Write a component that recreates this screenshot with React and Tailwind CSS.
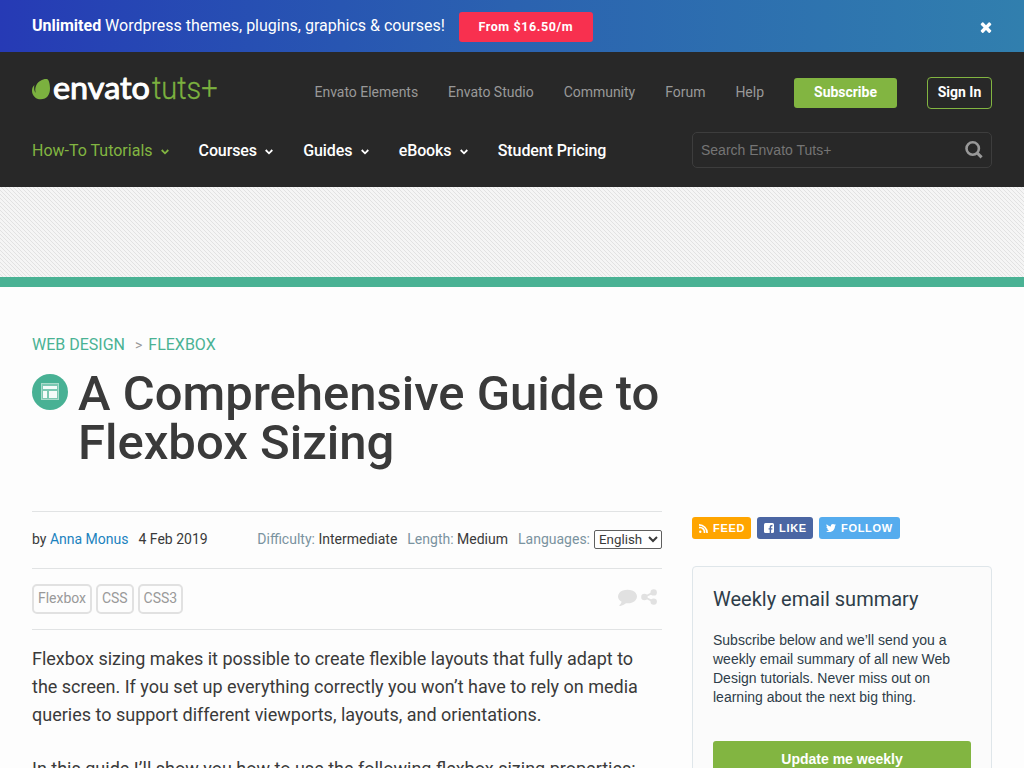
import React from "react";
import { FaTwitter } from "react-icons/fa";

const Chevron = ({ className = "" }) => (
  <svg className={className} width="8" height="6" viewBox="0 0 8 6" fill="none" stroke="currentColor" strokeWidth="1.8">
    <path d="M0.7 1 L4 4.3 L7.3 1" />
  </svg>
);

const Logo = () => (
  <svg width="190" height="32" viewBox="0 0 190 32" className="block overflow-visible" aria-label="envato tuts+">
    <path
      fill="#7bb13f"
      d="M15.500 2.200C12 1.300 6.500 3.800 4.300 8.200C3 11 3 13.500 3.800 16C1.900 14 1.900 10.500 2.400 8C.8 9.500 0 11.500 0 13.700C0 18.500 3.700 22.300 8.800 22.300C15 22.300 18 17.500 18 11.500C18 7.500 17 3 15.500 2.200z"
    />
    <text x="21" y="21.700" fill="#fff" fontFamily="Lato, sans-serif" fontSize="31" fontWeight="400" stroke="#fff" strokeWidth="1" strokeLinejoin="round" textLength="97" lengthAdjust="spacingAndGlyphs">envato</text>
    <text x="120" y="22" fill="#7bb13f" stroke="#7bb13f" strokeWidth="0.300" fontFamily="Roboto, sans-serif" fontSize="31.500" fontWeight="300" textLength="65.500" lengthAdjust="spacingAndGlyphs">tuts+</text>
  </svg>
);

const topLinks = ["Envato Elements", "Envato Studio", "Community", "Forum", "Help"];
const tabs = [
  { label: "Courses", menu: true },
  { label: "Guides", menu: true },
  { label: "eBooks", menu: true },
  { label: "Student Pricing", menu: false },
];

function Promo() {
  return (
    <div className="flex h-[52px] items-center bg-linear-to-r from-[#263ab5] via-[#2b62b0] to-[#317fae] pr-[30px] pl-8 text-white">
      <p className="text-[16px] leading-6"><b className="font-bold">Unlimited</b> Wordpress themes, plugins, graphics &amp; courses!</p>
      <a className="mt-[2px] ml-[14px] flex h-[30px] w-[134px] items-center justify-center rounded-[3px] bg-[#f8304f] text-[12.500px] font-bold tracking-[0.6px]">From $16.50/m</a>
      <svg className="mt-[2px] ml-auto" width="16" height="16" viewBox="0 0 1792 1792" fill="#fff">
        <path d="M1490 1322q0 40-28 68l-136 136q-28 28-68 28t-68-28l-294-294-294 294q-28 28-68 28t-68-28l-136-136q-28-28-28-68t28-68l294-294-294-294q-28-28-28-68t28-68l136-136q28-28 68-28t68 28l294 294 294-294q28-28 68-28t68 28l136 136q28 28 28 68t-28 68l-294 294 294 294q28 28 28 68z" />
      </svg>
    </div>
  );
}

function Header() {
  return (
    <header className="h-[135px] bg-[#282828] px-8 pt-[25px]">
      <div className="flex h-8 items-center justify-between">
        <Logo />
        <nav className="flex items-center gap-[30px] text-[14px] tracking-[-0.02px] text-[#999]">
          {topLinks.map((l) => <a key={l} className="pb-[2px]">{l}</a>)}
          <a className="flex h-[30px] w-[103px] items-center justify-center rounded-[3px] bg-[#82b541] pb-[2px] font-bold text-white">Subscribe</a>
          <a className="flex h-8 w-[65px] items-center justify-center rounded-[4px] border border-[#82b541] pb-[2px] font-bold text-white">Sign In</a>
        </nav>
      </div>
      <div className="mt-[23px] flex h-9 items-center">
        <nav className="flex items-center gap-[30px] pt-[2px] text-[16px] font-medium tracking-[-0.1px] text-white">
          <a className="flex items-center font-normal tracking-normal text-[#82b541]">How-To Tutorials<Chevron className="mt-[2px] ml-2" /></a>
          {tabs.map((t) => (
            <a key={t.label} className="flex items-center">{t.label}{t.menu && <Chevron className="mt-[2px] ml-[8.300px]" />}</a>
          ))}
        </nav>
        <div className="ml-auto flex h-9 w-[300px] items-center justify-between rounded-[5px] border border-[#3d3d3d] px-2 font-['Liberation_Sans',sans-serif] text-[14px] text-[#757575]">
          <span>Search Envato Tuts+</span>
          <svg width="18" height="18" viewBox="0 0 18 18" fill="none" stroke="#999">
            <circle cx="7.700" cy="7.500" r="6.200" strokeWidth="2.600" />
            <path d="M12.200 12 L16.600 16.400" strokeWidth="3" />
          </svg>
        </div>
      </div>
    </header>
  );
}

const Meta = ({ label, value }) => (
  <span className="text-[#7a93a0]">{label}: <span className="text-[#3a3a3a]">{value}</span></span>
);

function Article() {
  return (
    <main className="w-[630px] text-[#3a3a3a]">
      <div className="flex h-[25px] items-center pt-px text-[16px] text-[#4ab294]">
        <a>WEB DESIGN</a><span className="mr-[6px] ml-[10px] text-[14px] text-[#999]">&gt;</span><a>FLEXBOX</a>
      </div>
      <div className="mt-[12px] flex">
        <svg className="mt-[5px] mr-[10px] shrink-0" width="36" height="36" viewBox="0 0 36 36">
          <circle cx="18" cy="18" r="18" fill="#48b194" />
          <rect x="9.500" y="9.500" width="17" height="16" fill="#7cc8b2" stroke="#a9dbcb" />
          <path fill="#f4fbf9" d="M11 12h14v3H11zM11 17h4v7h-4zM17 17h8v7h-8z" />
        </svg>
        <h1 className="text-[49px] leading-[49px] font-medium whitespace-nowrap">A Comprehensive Guide to<br />Flexbox Sizing</h1>
      </div>
      <div className="mt-[44px] flex h-[57px] items-center border-t border-[#e1e3e4] pb-[2px] text-[14px]">
        <span>by <a className="text-[#1b82be]">Anna Monus</a></span>
        <span className="ml-[10px]">4 Feb 2019</span>
        <div className="ml-auto flex items-center gap-[10px]">
          <Meta label="Difficulty" value="Intermediate" />
          <Meta label="Length" value="Medium" />
          <span className="flex items-center gap-1 text-[#7a93a0]">
            Languages:
            <select className="h-[19px] w-[68px] rounded-[2px] border border-[#5f5f5f] bg-white text-[13.333px] text-[#3a3a3a]">
              <option>English</option>
            </select>
          </span>
        </div>
      </div>
      <div className="flex h-[62px] items-center border-y border-[#e1e3e4]">
        <div className="flex gap-[4px] text-[14px] tracking-[-0.03px] text-[#999]">
          {["Flexbox", "CSS", "CSS3"].map((t) => (
            <a key={t} className="flex h-[30px] items-center rounded-[5px] border-2 border-[#e1e1e1] px-1 pb-[2px]">{t}</a>
          ))}
        </div>
        <div className="mr-[5px] mb-[5px] ml-auto flex items-center gap-1 text-[#e1e1e1]">
          <svg width="19" height="19" viewBox="0 0 1792 1792" fill="currentColor">
            <path d="M1792 896q0 174-120 321.500t-326 233-450 85.500q-70 0-145-8-198 175-460 242-49 14-114 22h-5q-15 0-27-10.500t-16-27.500v-1q-3-4-.5-12t2-10 4.500-9.500l6-9 7-8.500 8-9q7-8 31-34.500t34.500-38 31-39.500 32.500-51 27-59 26-76q-157-89-247.500-220t-90.500-281q0-174 120-321.500t326-233 450-85.500 450 85.500 326 233 120 321.500z" />
          </svg>
          <svg width="16" height="16" viewBox="0 0 16 16" fill="currentColor">
            <path d="M3.300 8 L12.600 3.300 M3.300 8 L12.600 12.700" stroke="currentColor" strokeWidth="1.900" />
            <circle cx="3.400" cy="8" r="3.200" /><circle cx="12.700" cy="3.400" r="3.200" /><circle cx="12.700" cy="12.600" r="3.200" />
          </svg>
        </div>
      </div>
      <div className="pt-[15px] text-[18px] leading-7">
        <p>Flexbox sizing makes it possible to create flexible layouts that fully adapt to the screen. If you set up everything correctly you won’t have to rely on media queries to support different viewports, layouts, and orientations.</p>
        <p className="mt-[26px]">In this guide I’ll show you how to use the following flexbox sizing properties:</p>
      </div>
    </main>
  );
}

function Sidebar() {
  return (
    <aside className="w-[300px] pt-[185px]">
      <div className="flex gap-[6px] font-['Liberation_Sans',sans-serif] text-[11px] font-bold tracking-[0.7px] text-white">
        <a className="flex h-[22px] w-[59px] items-center gap-[5px] rounded-[3px] bg-[#ffa500] pl-[7px]">
          <svg width="9" height="9" viewBox="0 0 9 9" fill="none" stroke="#fff" strokeWidth="1.700">
            <circle cx="1.300" cy="7.700" r="1.200" fill="#fff" stroke="none" />
            <path d="M0 3.700 A4.300 4.300 0 0 1 5.300 9 M0 0.900 A8 8 0 0 1 8.100 9" />
          </svg>FEED
        </a>
        <a className="flex h-[22px] w-[56px] items-center gap-[5px] rounded-[3px] bg-[#4b66a3] pl-[7px]">
          <svg width="10" height="10" viewBox="0 0 10 10">
            <rect width="10" height="10" rx="1.500" fill="#fff" />
            <path d="M6.400 10V6M4.600 5.900H8.400M6.400 6V4Q6.400 2.500 8.500 2.500" fill="none" stroke="#4b66a3" strokeWidth="1.400" />
          </svg>LIKE
        </a>
        <a className="flex h-[22px] w-[81px] items-center gap-[5px] rounded-[3px] bg-[#55acee] pl-[7px]"><FaTwitter size={10} />FOLLOW</a>
      </div>
      <section className="mt-[27px] h-[300px] rounded-[4px] border border-[#dfe6ea] bg-[#fbfbfb] px-5 pt-[17px] text-[#2e3d49]">
        <h2 className="text-[20px] leading-[30px]">Weekly email summary</h2>
        <p className="mt-[17px] font-['Liberation_Sans',sans-serif] text-[14px] leading-[19px]">Subscribe below and we’ll send you a weekly email summary of all new Web Design tutorials. Never miss out on learning about the next big thing.</p>
        <a className="mt-[34px] flex h-9 items-center justify-center rounded-[3px] bg-[#82b541] font-['Liberation_Sans',sans-serif] text-[14px] font-bold text-white">Update me weekly</a>
      </section>
    </aside>
  );
}

export default function App() {
  return (
    <div className="h-[768px] w-[1024px] overflow-hidden bg-[#fdfdfd] font-['Roboto',sans-serif]">
      <Promo />
      <Header />
      <div className="h-[100px] border-b-[10px] border-[#4ab294] bg-[#f5f5f5] bg-[linear-gradient(45deg,#e2e2e2_12.5%,transparent_12.5%_50%,#e2e2e2_50%_62.5%,transparent_62.5%)] bg-[size:4px_4px]" />
      <div className="flex justify-between px-8 pt-[45px]">
        <Article />
        <Sidebar />
      </div>
    </div>
  );
}
